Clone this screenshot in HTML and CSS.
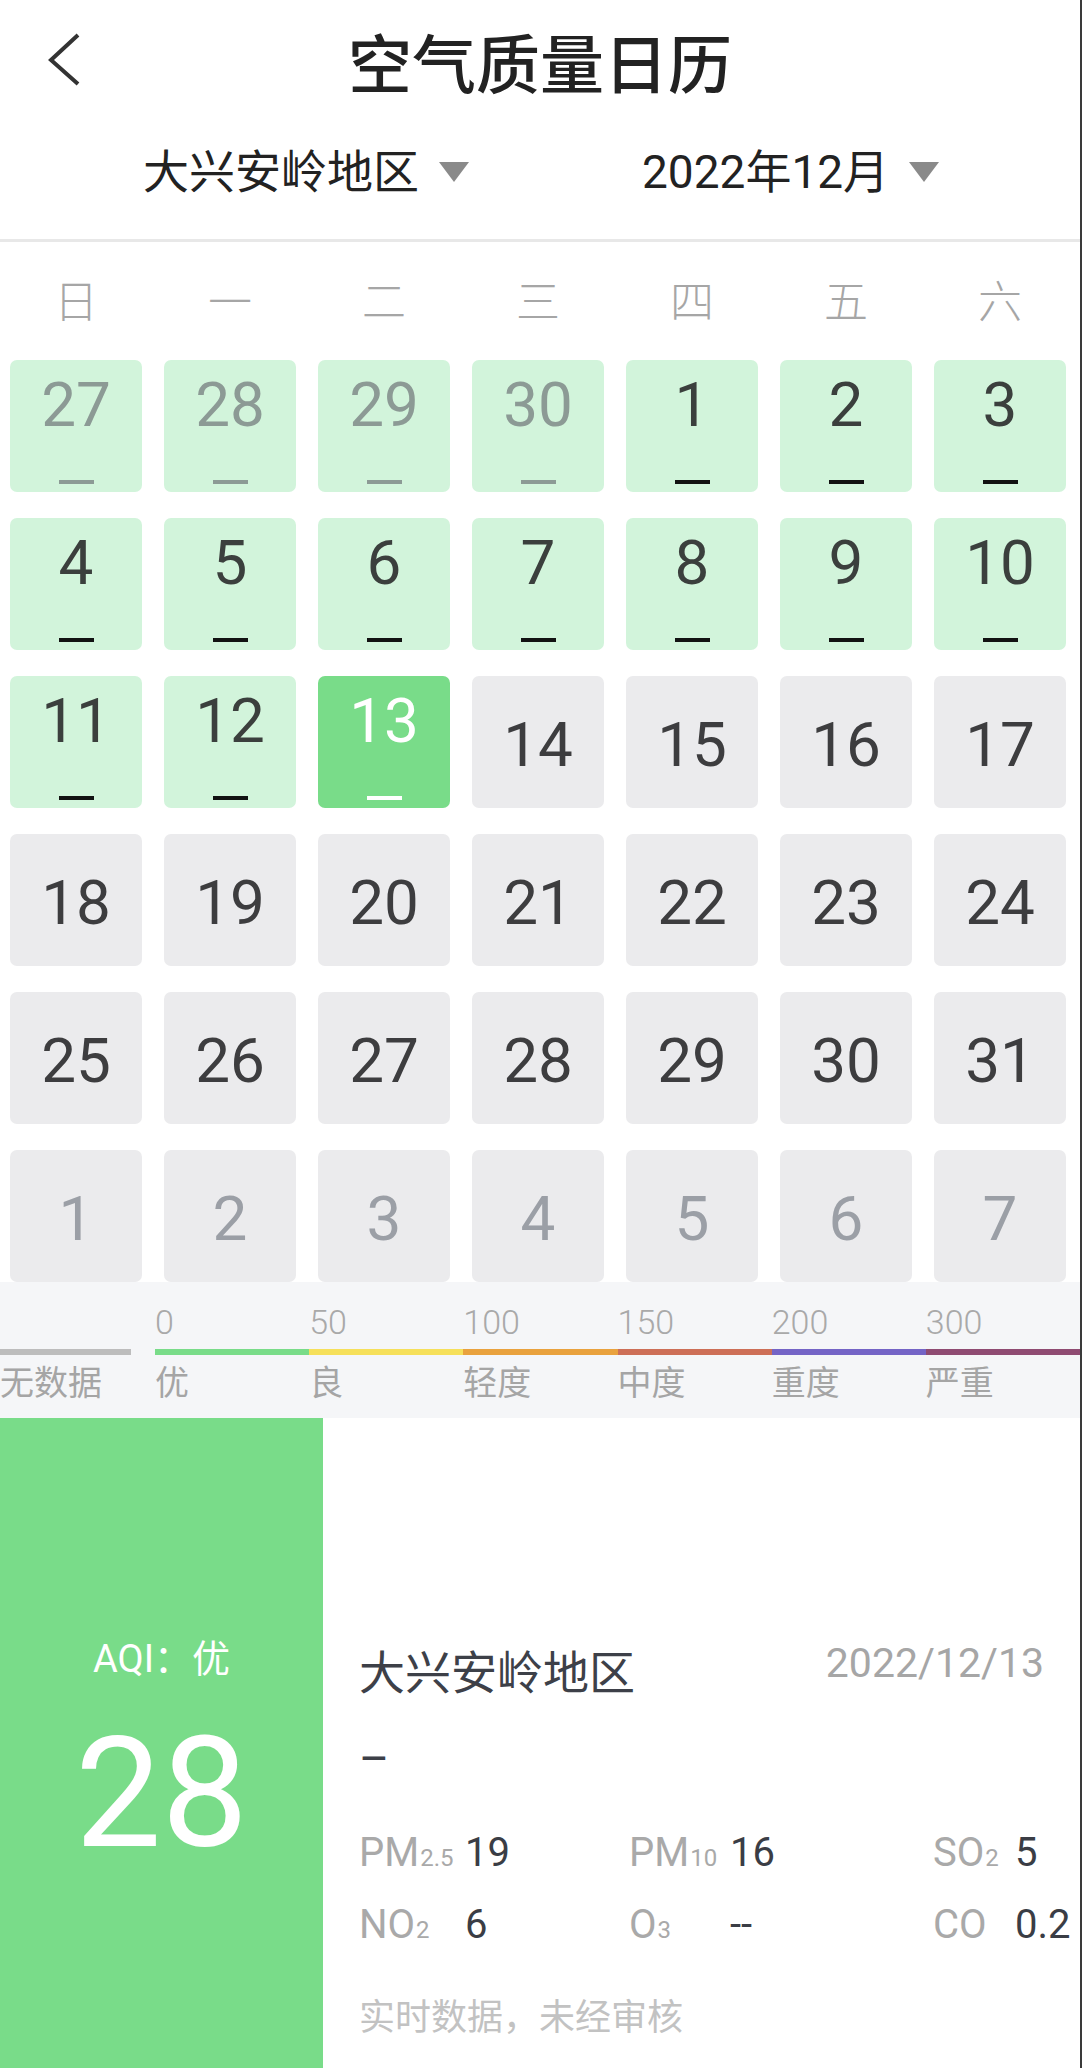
FILE: index.html
```html
<!DOCTYPE html>
<html lang="zh-CN">
<head>
<meta charset="utf-8">
<title>空气质量日历</title>
<link rel="stylesheet" href="styles.css">
</head>
<body>
<div class="page">
  <header class="topbar">
    <div class="back">
      <svg width="36" height="56" viewBox="0 0 36 56"><polyline points="32,3 5,28 32,52" fill="none" stroke="#333" stroke-width="4" stroke-linejoin="miter"/></svg>
    </div>
    <h1 class="title">空气质量日历</h1>
    <div></div>
  </header>
  <div class="selectors">
    <div class="sel-item">大兴安岭地区<svg class="caret" width="30" height="20" viewBox="0 0 30 20"><polygon points="0,0 30,0 15,20" fill="#8a8a8a"/></svg></div>
    <div class="sel-item right">2022年12月<svg class="caret" width="30" height="20" viewBox="0 0 30 20"><polygon points="0,0 30,0 15,20" fill="#8a8a8a"/></svg></div>
  </div>
  <div class="divider"></div>

  <div class="weekdays">
    <span>日</span><span>一</span><span>二</span><span>三</span><span>四</span><span>五</span><span>六</span>
  </div>

  <div class="calendar">
    <div class="cell good prev"><span class="num">27</span><span class="dash"></span></div>
    <div class="cell good prev"><span class="num">28</span><span class="dash"></span></div>
    <div class="cell good prev"><span class="num">29</span><span class="dash"></span></div>
    <div class="cell good prev"><span class="num">30</span><span class="dash"></span></div>
    <div class="cell good"><span class="num">1</span><span class="dash"></span></div>
    <div class="cell good"><span class="num">2</span><span class="dash"></span></div>
    <div class="cell good"><span class="num">3</span><span class="dash"></span></div>

    <div class="cell good"><span class="num">4</span><span class="dash"></span></div>
    <div class="cell good"><span class="num">5</span><span class="dash"></span></div>
    <div class="cell good"><span class="num">6</span><span class="dash"></span></div>
    <div class="cell good"><span class="num">7</span><span class="dash"></span></div>
    <div class="cell good"><span class="num">8</span><span class="dash"></span></div>
    <div class="cell good"><span class="num">9</span><span class="dash"></span></div>
    <div class="cell good"><span class="num">10</span><span class="dash"></span></div>

    <div class="cell good"><span class="num">11</span><span class="dash"></span></div>
    <div class="cell good"><span class="num">12</span><span class="dash"></span></div>
    <div class="cell good selected"><span class="num">13</span><span class="dash"></span></div>
    <div class="cell empty"><span class="num">14</span></div>
    <div class="cell empty"><span class="num">15</span></div>
    <div class="cell empty"><span class="num">16</span></div>
    <div class="cell empty"><span class="num">17</span></div>

    <div class="cell empty"><span class="num">18</span></div>
    <div class="cell empty"><span class="num">19</span></div>
    <div class="cell empty"><span class="num">20</span></div>
    <div class="cell empty"><span class="num">21</span></div>
    <div class="cell empty"><span class="num">22</span></div>
    <div class="cell empty"><span class="num">23</span></div>
    <div class="cell empty"><span class="num">24</span></div>

    <div class="cell empty"><span class="num">25</span></div>
    <div class="cell empty"><span class="num">26</span></div>
    <div class="cell empty"><span class="num">27</span></div>
    <div class="cell empty"><span class="num">28</span></div>
    <div class="cell empty"><span class="num">29</span></div>
    <div class="cell empty"><span class="num">30</span></div>
    <div class="cell empty"><span class="num">31</span></div>

    <div class="cell empty next"><span class="num">1</span></div>
    <div class="cell empty next"><span class="num">2</span></div>
    <div class="cell empty next"><span class="num">3</span></div>
    <div class="cell empty next"><span class="num">4</span></div>
    <div class="cell empty next"><span class="num">5</span></div>
    <div class="cell empty next"><span class="num">6</span></div>
    <div class="cell empty next"><span class="num">7</span></div>
  </div>

  <div class="legend">
    <div class="lg-col first"><span class="lg-num"></span><span class="lg-bar c-none"></span><span class="lg-label">无数据</span></div>
    <div class="lg-col"><span class="lg-num">0</span><span class="lg-bar c-1"></span><span class="lg-label">优</span></div>
    <div class="lg-col"><span class="lg-num">50</span><span class="lg-bar c-2"></span><span class="lg-label">良</span></div>
    <div class="lg-col"><span class="lg-num">100</span><span class="lg-bar c-3"></span><span class="lg-label">轻度</span></div>
    <div class="lg-col"><span class="lg-num">150</span><span class="lg-bar c-4"></span><span class="lg-label">中度</span></div>
    <div class="lg-col"><span class="lg-num">200</span><span class="lg-bar c-5"></span><span class="lg-label">重度</span></div>
    <div class="lg-col"><span class="lg-num">300</span><span class="lg-bar c-6"></span><span class="lg-label">严重</span></div>
  </div>

  <section class="detail">
    <div class="aqi-panel">
      <div class="aqi-label">AQI：优</div>
      <div class="aqi-value">28</div>
    </div>
    <div class="info">
      <div class="info-head">
        <span class="place">大兴安岭地区</span>
        <span class="date">2022/12/13</span>
      </div>
      <div class="info-dash">–</div>
      <div class="pollutants">
        <span class="pl">PM<span class="sub">2.5</span></span><span class="pv">19</span>
        <span class="pl">PM<span class="sub">10</span></span><span class="pv">16</span>
        <span class="pl">SO<span class="sub">2</span></span><span class="pv">5</span>
        <span class="pl">NO<span class="sub">2</span></span><span class="pv">6</span>
        <span class="pl">O<span class="sub">3</span></span><span class="pv">--</span>
        <span class="pl">CO</span><span class="pv">0.2</span>
      </div>
      <div class="note">实时数据，未经审核</div>
    </div>
  </section>
</div>
</body>
</html>
```

FILE: styles.css
```css
* {
  box-sizing: border-box;
  margin: 0;
  padding: 0;
}

body {
  margin: 0;
  background: #ffffff;
  font-family: Roboto, "Noto Sans CJK SC", sans-serif;
}

.page {
  width: 1082px;
  min-height: 2068px;
  border-right: 2px solid #3a3a3a;
  display: flex;
  flex-direction: column;
  overflow: hidden;
}

/* Header */
.topbar {
  height: 120px;
  display: grid;
  grid-template-columns: 1fr auto 1fr;
  align-items: center;
}

.back {
  align-self: start;
  margin-top: 32px;
  padding-left: 46px;
  display: flex;
}

.title {
  font-family: "Noto Sans CJK SC", sans-serif;
  font-size: 64px;
  font-weight: 500;
  line-height: 64px;
  color: #222222;
}

.selectors {
  height: 104px;
  margin-bottom: 15px;
  display: flex;
  align-items: center;
  padding-left: 143px;
  gap: 173px;
}

.sel-item {
  display: flex;
  align-items: center;
  font-size: 46px;
  line-height: 46px;
  color: #222222;
}

.caret {
  margin-left: 20px;
}

.divider {
  height: 3px;
  background: #e8e8e8;
}

/* Weekdays */
.weekdays {
  height: 118px;
  padding-left: 10px;
  padding-bottom: 4px;
  display: grid;
  grid-template-columns: repeat(7, 132px);
  column-gap: 22px;
  align-items: center;
  justify-items: center;
  font-family: "Noto Sans CJK SC", sans-serif;
  font-size: 44px;
  font-weight: 300;
  color: #a6a6a6;
}

/* Calendar grid */
.calendar {
  padding-left: 10px;
  display: grid;
  grid-template-columns: repeat(7, 132px);
  grid-auto-rows: 132px;
  column-gap: 22px;
  row-gap: 26px;
}

.cell {
  border-radius: 7px;
  display: flex;
  flex-direction: column;
  align-items: center;
}

.num {
  font-size: 62px;
  line-height: 62px;
}

.good {
  background: #d2f4db;
  justify-content: space-between;
  padding: 14px 0 8px;
}

.good .num {
  color: #3b3f3d;
}

.good .dash {
  width: 35px;
  height: 4px;
  background: #121212;
}

.good.prev .num {
  color: #8c9a95;
}

.good.prev .dash {
  background: #8c9a95;
}

.good.selected {
  background: #79dc89;
}

.good.selected .num {
  color: #ffffff;
}

.good.selected .dash {
  background: #ffffff;
}

.empty {
  background: #ebebed;
  justify-content: center;
  padding-top: 6px;
}

.empty .num {
  color: #3d3d3f;
}

.empty.next .num {
  color: #9b9fa6;
}

/* Legend */
.legend {
  background: #f5f6f8;
  padding: 23px 0 20px;
  display: flex;
}

.lg-col {
  flex: 1;
  display: flex;
  flex-direction: column;
}

.lg-col.first {
  flex: 0 0 131px;
  margin-right: 24px;
}

.lg-num {
  height: 34px;
  font-size: 34px;
  line-height: 34px;
  font-weight: 300;
  color: #a9a9a9;
}

.lg-bar {
  height: 6px;
  margin-top: 10px;
}

.lg-label {
  margin-top: 9px;
  font-family: "Noto Sans CJK SC", sans-serif;
  font-size: 34px;
  line-height: 34px;
  color: #a5a5a5;
}

.c-none { background: #bdbdbd; }
.c-1 { background: #79dc89; }
.c-2 { background: #f6e05b; }
.c-3 { background: #e9a23e; }
.c-4 { background: #cd6f57; }
.c-5 { background: #7464c6; }
.c-6 { background: #8f4b72; }

/* Detail */
.detail {
  flex: 1;
  display: flex;
}

.aqi-panel {
  flex: 0 0 323px;
  background: #79dc89;
  color: #ffffff;
  text-align: center;
  padding-top: 219px;
}

.aqi-label {
  font-size: 38px;
  line-height: 44px;
}

.aqi-value {
  margin-top: 36px;
  font-size: 154px;
  line-height: 154px;
  font-weight: 400;
}

.info {
  flex: 1 1 auto;
  min-width: 0;
  padding: 228px 36px 0 36px;
}

.info-head {
  height: 46px;
  display: flex;
  justify-content: space-between;
  align-items: center;
}

.place {
  font-family: "Noto Sans CJK SC", sans-serif;
  font-size: 46px;
  line-height: 46px;
  color: #3d4048;
}

.date {
  font-size: 41px;
  line-height: 48px;
  color: #a6a6a6;
  margin-bottom: 13px;
}

.info-dash {
  margin-top: 44px;
  font-size: 46px;
  line-height: 46px;
  color: #3d4048;
}

.pollutants {
  margin-top: 47px;
  display: grid;
  grid-template-columns: 106px 164px 101px 203px 82px 1fr;
  grid-auto-rows: 48px;
  row-gap: 24px;
  font-size: 40px;
  line-height: 48px;
}

.pl {
  color: #a9a9a9;
  white-space: nowrap;
}

.pl .sub {
  font-size: 24px;
  margin-left: 1px;
}

.pv {
  color: #3a3d45;
  white-space: nowrap;
}

.note {
  margin-top: 47px;
  font-family: "Noto Sans CJK SC", sans-serif;
  font-size: 36px;
  line-height: 36px;
  color: #c2c2c2;
}
```
